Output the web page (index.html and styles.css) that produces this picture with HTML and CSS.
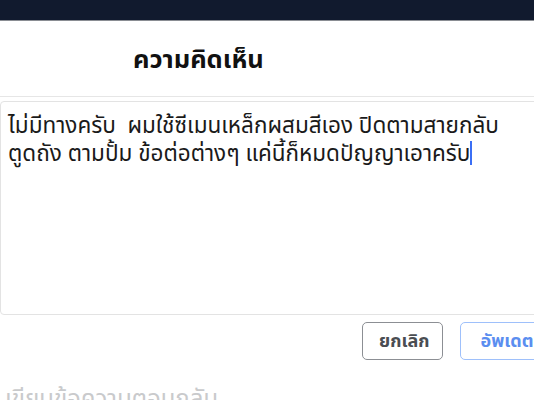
FILE: index.html
```html
<!DOCTYPE html>
<html lang="th">
<head>
  <meta charset="UTF-8">
  <meta name="viewport" content="width=device-width, initial-scale=1.0">
  <title>ความคิดเห็น</title>
  <link rel="stylesheet" href="styles.css">
</head>
<body>
  <div class="topbar"></div>

  <div class="modal">
    <div class="modal-header">
      <h2 class="modal-title">ความคิดเห็น</h2>
    </div>

    <div class="modal-body">
      <div class="editor">ไม่มีทางครับ&nbsp; ผมใช้ซีเมนเหล็กผสมสีเอง ปิดตามสายกลับ<br>ตูดถัง ตามปั้ม ข้อต่อต่างๆ แค่นี้ก็หมดปัญญาเอาครับ<span class="caret"></span></div>
    </div>

    <div class="modal-footer">
      <button class="btn btn-cancel">ยกเลิก</button>
      <button class="btn btn-update">อัพเดต</button>
    </div>
  </div>

  <div class="reply">เขียนข้อความตอบกลับ...</div>
</body>
</html>
```

FILE: styles.css
```css
body {
  margin: 0;
  font-family: "Noto Sans Thai", "Noto Sans", sans-serif;
  background-color: #fff;
  overflow: hidden;
  width: 534px;
  height: 400px;
}
.topbar {
  height: 20px;
  background-color: #111a2e;
  border-bottom: 1px solid #8a8d93;
}
.modal-header {
  height: 75px;
  border-bottom: 1px solid #e6e6e6;
  display: flex;
  align-items: center;
  padding-left: 133px;
}
.modal-title {
  margin: 0;
  margin-top: 2px;
  font-size: 25.5px;
  font-weight: bold;
  color: #111;
}
.modal-body {
  padding: 4px 0 0 0;
}
.editor {
  height: 192px;
  margin-right: -10px;
  border: 1px solid #e3e3e3;
  border-radius: 4px;
  padding: 10px 7px;
  font-size: 22.5px;
  line-height: 28px;
  color: #1a1a1a;
}
.caret {
  display: inline-block;
  width: 2px;
  height: 24px;
  background-color: #3b6ff5;
  vertical-align: -4px;
}
.modal-footer {
  display: flex;
  justify-content: flex-end;
  gap: 17px;
  padding: 7px 0 0 0;
  margin-right: -20px;
}
.btn {
  height: 38px;
  padding: 0 16px;
  border-radius: 5px;
  font-family: inherit;
  font-size: 18px;
  font-weight: bold;
  background-color: #fff;
  cursor: pointer;
}
.btn-cancel {
  width: 81px;
  border: 1px solid #8c8f94;
  color: #4a4d52;
}
.btn-update {
  width: 94px;
  border: 1px solid #9ec0fb;
  color: #5b8ef0;
}
.reply {
  margin-top: 22px;
  padding-left: 5px;
  font-size: 24px;
  color: #c9cacc;
}
```
